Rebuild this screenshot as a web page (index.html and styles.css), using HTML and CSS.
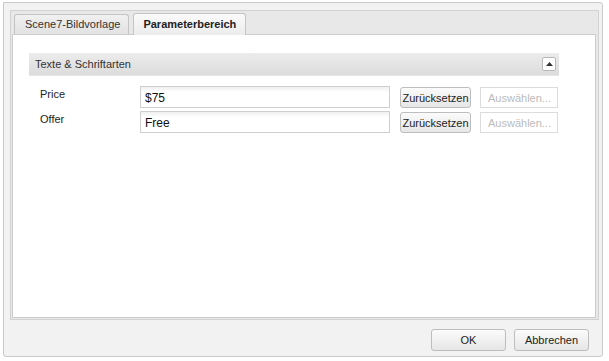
FILE: index.html
```html
<!DOCTYPE html>
<html lang="de">
<head>
    <meta charset="UTF-8">
    <title>Parameterbereich</title>
    <link rel="stylesheet" href="styles.css">
</head>
<body>
    <div class="dialog">
        <div class="tab-frame">
            <div class="tab-strip">
                <div class="tab">Scene7-Bildvorlage</div>
                <div class="tab tab-active">Parameterbereich</div>
            </div>
            <div class="tab-body">
                <div class="section-head">
                    <span>Texte &amp; Schriftarten</span>
                    <span class="collapse-btn">
                        <svg width="7" height="4" viewBox="0 0 7 4"><path d="M0 4 L3.5 0 L7 4 Z" fill="#333"/></svg>
                    </span>
                </div>
                <div class="field-row">
                    <label class="field-label">Price</label>
                    <input class="field-input" type="text" value="$75">
                    <button class="btn btn-small">Zurücksetzen</button>
                    <button class="btn btn-small btn-disabled">Auswählen...</button>
                </div>
                <div class="field-row">
                    <label class="field-label">Offer</label>
                    <input class="field-input" type="text" value="Free">
                    <button class="btn btn-small">Zurücksetzen</button>
                    <button class="btn btn-small btn-disabled">Auswählen...</button>
                </div>
            </div>
        </div>
        <div class="footer">
            <button class="btn btn-footer">OK</button>
            <button class="btn btn-footer">Abbrechen</button>
        </div>
    </div>
</body>
</html>
```

FILE: styles.css
```css
body {
    margin: 0;
    background-color: #ffffff;
    font-family: "Liberation Sans", Arial, sans-serif;
    font-size: 11px;
    color: #222222;
}
.dialog {
    box-sizing: border-box;
    margin: 2px 6px 0 3px;
    width: 600px;
    height: 355px;
    border: 1px solid #c9c9c9;
    border-radius: 0 3px 3px 3px;
    background-color: #f2f2f2;
    padding: 7px 3px 0 6px;
}
.tab-frame {
    box-sizing: border-box;
    height: 310px;
    border: 1px solid #d2d2d2;
    background-color: #e8e8e8;
    display: flex;
    flex-direction: column;
}
.tab-strip {
    display: flex;
    align-items: flex-end;
    gap: 4px;
    height: 23px;
    padding-left: 3px;
}
.tab {
    box-sizing: border-box;
    height: 20px;
    padding: 0 8px 0 10px;
    line-height: 19px;
    font-size: 11px;
    color: #333333;
    border: 1px solid #c4c4c4;
    border-bottom: none;
    border-radius: 3px 3px 0 0;
    background: linear-gradient(#f0f0f0, #e2e2e2);
}
.tab-active {
    height: 22px;
    line-height: 20px;
    padding: 0 9px 0 9px;
    font-weight: bold;
    color: #222222;
    background: linear-gradient(#fafafa, #ececec);
    margin-bottom: -1px;
    position: relative;
}
.tab-body {
    flex: 1;
    margin: 0 2px 1px 1px;
    border: 1px solid #cccccc;
    background-color: #ffffff;
    padding: 18px 36px 0 16px;
}
.section-head {
    box-sizing: border-box;
    height: 23px;
    display: flex;
    align-items: center;
    justify-content: space-between;
    padding: 0 3px 0 6px;
    color: #333333;
    background: linear-gradient(#ececec, #dcdcdc);
    border-bottom: 1px solid #e6e6e6;
    margin-bottom: 10px;
}
.collapse-btn {
    box-sizing: border-box;
    width: 14px;
    height: 14px;
    border: 1px solid #b8b8b8;
    border-radius: 2px;
    background: #ffffff;
    display: flex;
    align-items: center;
    justify-content: center;
}
.field-row {
    display: flex;
    align-items: flex-start;
    height: 25px;
}
.field-label {
    width: 100px;
    padding: 2px 0 0 11px;
    color: #222222;
}
.field-input {
    box-sizing: border-box;
    width: 250px;
    height: 22px;
    margin: 0 10px 0 0;
    padding: 2px 4px 0;
    border: 1px solid #cfcfcf;
    background: linear-gradient(#efefef, #ffffff 5px);
    font-family: "Liberation Sans", Arial, sans-serif;
    font-size: 12px;
    color: #111111;
}
.btn {
    box-sizing: border-box;
    font-family: "Liberation Sans", Arial, sans-serif;
    font-size: 11px;
    color: #222222;
    border: 1px solid #bdbdbd;
    border-radius: 3px;
    background: linear-gradient(#fbfbfb, #e6e6e6);
    padding: 0;
}
.btn-small {
    width: 71px;
    height: 21px;
    margin: 1px 9px 0 0;
}
.btn-disabled {
    width: 78px;
    color: #bbbbbb;
    border-color: #dcdcdc;
    border-radius: 0;
    background: #ffffff;
    text-align: left;
    padding-left: 7px;
    margin-right: 0;
}
.footer {
    display: flex;
    justify-content: flex-end;
    gap: 8px;
    padding: 9px 10px 0 0;
}
.btn-footer {
    width: 75px;
    height: 22px;
}
```
